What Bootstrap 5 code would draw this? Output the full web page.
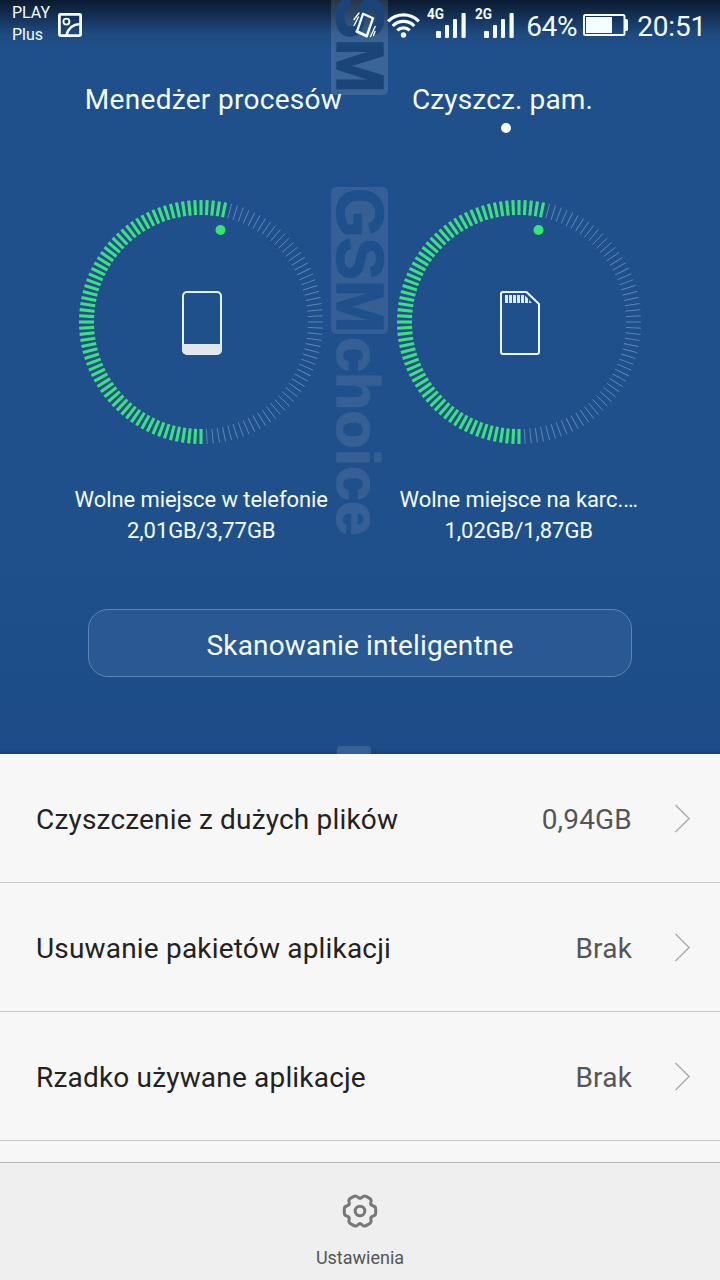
<!DOCTYPE html>
<html lang="pl">
<head>
<meta charset="utf-8">
<meta name="viewport" content="width=device-width, initial-scale=1">
<title>Czyszcz. pam.</title>
<link href="https://cdn.jsdelivr.net/npm/bootstrap@5.3.0/dist/css/bootstrap.min.css" rel="stylesheet">
<style>
body{font-family:Roboto,"Noto Sans",sans-serif;background:#f7f7f7;height:1280px;overflow:hidden;line-height:1.2}
svg{display:block;flex:none}
.hero{height:754px;background:linear-gradient(#0b1a2f 0,#143055 16px,#1e4a80 34px,#1f508b 48px,#1f508b 560px,#1d4c88 747px,#1a4478 754px);color:#f4fdff}
.statusbar{height:50px;padding:0 14px 0 12px}
.carrier{font-size:16px;line-height:22px;width:46px;padding-top:2px}
.pct{font-size:28px;line-height:50px;padding-top:2px;letter-spacing:-.4px;width:52px}
.clock{font-size:28px;line-height:50px;padding-top:2px;letter-spacing:-.2px}
.tabs{padding:33px 67px 0;height:86px;font-size:28px;letter-spacing:.3px}
.tabs>div{width:293px;line-height:34px;white-space:nowrap}
.tab-dot{width:10px;height:10px;background:#fff;margin:6px 1px 0 0}
.dials{padding:63px 42.5px 0;height:473px}
.dial-text{font-size:22px;line-height:31px;margin-top:39px;white-space:nowrap;letter-spacing:-.07px}
.scan{width:544px;height:68px;border:1px solid #5c84b4;border-radius:20px;background:#2a5892;color:#f4fdff;font-size:28px;letter-spacing:.16px;line-height:1}
.scan span{padding-top:5px}
.wm{left:331px;font:700 62px/57px "Liberation Sans",sans-serif}
.wm svg{overflow:visible}
.wm text{stroke-linejoin:round}
.opt{height:129px;border-bottom:1px solid #cbcbcb;padding:0 29px 0 36px;font-size:28px;color:#222;letter-spacing:.18px}
.opt span{padding-top:3px}
.opt-val{color:#555;margin-right:42px}
.bottombar{height:118px;background:#efefef;border-top:1px solid #b8b8b8;color:#555;font-size:18px}
</style>
</head>
<body>
<main class="d-flex flex-column h-100">
<section class="hero position-relative overflow-hidden flex-shrink-0">
  <div class="wm position-absolute" style="top:0" aria-hidden="true"><svg width="57" height="95"><rect y="-10" width="57" height="105" rx="5" fill="#fff" fill-opacity=".12"/><text transform="translate(6 -5) rotate(90)" textLength="98" lengthAdjust="spacingAndGlyphs" font-size="66" fill="#1b4579" stroke="#1b4579" stroke-width="1.500">SM</text></svg></div>
  <div class="wm position-absolute" style="top:187px" aria-hidden="true"><svg width="57" height="352"><rect width="57" height="147" rx="5" fill="#355f95"/><text transform="translate(6 1) rotate(90)" textLength="145" lengthAdjust="spacingAndGlyphs" font-size="66" fill="#1f508b" stroke="#1f508b" stroke-width="1.500">GSM</text><text transform="translate(6 150) rotate(90)" textLength="199" lengthAdjust="spacingAndGlyphs" font-size="62" fill="#355f95" stroke="#355f95" stroke-width="1.500">choice</text></svg></div>
  <div class="wm position-absolute" style="top:746px" aria-hidden="true"><svg width="57" height="8"><rect x="6" width="34" height="12" rx="3" fill="#355f95"/></svg></div>

  <div class="position-relative">
  <header class="statusbar d-flex">
    <div class="carrier">PLAY<br>Plus</div>
    <svg width="24" height="24" viewBox="0 0 24 24" style="margin-top:13px" fill="none" stroke="#f4fdff"><rect x="1.4" y="1.4" width="21.2" height="21.2" rx="1" stroke-width="2.8"/><circle cx="8.4" cy="8.6" r="3" stroke-width="1.9"/><path d="M8.500 22C10 16 14 11.500 22 11" stroke-width="2.500"/></svg>
    <div class="ms-auto d-flex">
      <svg width="24" height="26" viewBox="0 0 24 26" style="margin:12px 11px 0 0" fill="none" stroke="#f4fdff" stroke-linecap="round" stroke-linejoin="round"><path d="M11 1.800L21 6.200L14.800 24L5 19.500Z" stroke-width="2.300"/><path d="M14.500 24L5 19.500" stroke-width="3"/><path d="M7 1L2 7.500M6.500 5L2 13.500M23.200 14.500L18.500 24.500M23 19.500L21.500 23.500" stroke-width="1.400"/></svg>
      <svg width="33" height="26" viewBox="0 0 33 26" style="margin:12px 7px 0 0" fill="none" stroke="#f4fdff" stroke-width="3.200"><path d="M1.200 9.300A21.500 21.500 0 0 1 31.800 9.300M5.700 14A15 15 0 0 1 27.300 14M10.300 18.300A9 9 0 0 1 22.700 18.300"/><circle cx="16.500" cy="23" r="2.700" fill="#f4fdff" stroke="none"/></svg>
      <svg width="39" height="32" viewBox="0 0 39 32" style="margin:7px 9px 0 0" fill="#f4fdff"><text x="0" y="12" font-size="14.500" font-weight="700" textLength="17" lengthAdjust="spacingAndGlyphs">4G</text><rect x="9" y="24" width="5" height="7" rx="1"/><rect x="18" y="18" width="4" height="13" rx="1"/><rect x="26" y="12" width="4" height="19" rx="1"/><rect x="34.500" y="6" width="4.200" height="25" rx="1"/></svg>
      <svg width="39" height="32" viewBox="0 0 39 32" style="margin:7px 12px 0 0" fill="#f4fdff"><text x="0" y="12" font-size="14.500" font-weight="700" textLength="17" lengthAdjust="spacingAndGlyphs">2G</text><rect x="9" y="24" width="5" height="7" rx="1"/><rect x="18" y="18" width="4" height="13" rx="1"/><rect x="26" y="12" width="4" height="19" rx="1"/><rect x="34.500" y="6" width="4.200" height="25" rx="1"/></svg>
      <div class="pct">64%</div>
      <svg width="45" height="22" viewBox="0 0 45 22" style="margin:14px 9px 0 5px" fill="#f4fdff"><rect x="1" y="1" width="40.500" height="20" rx="1.500" fill="none" stroke="#f4fdff" stroke-width="2"/><rect x="3" y="3" width="26" height="16"/><path d="M42 5h1.500q1.500 0 1.500 1.500v9q0 1.500-1.500 1.500H42z"/></svg>
      <div class="clock">20:51</div>
    </div>
  </header>

  <nav class="tabs d-flex text-center">
    <div>Menedżer procesów</div>
    <div class="d-flex flex-column align-items-center"><span style="margin-right:8px;letter-spacing:.15px">Czyszcz. pam.</span><span class="tab-dot rounded-circle"></span></div>
  </nav>

  <div class="dials d-flex text-center">
    <div class="w-50">
      <svg class="mx-auto" width="246" height="246" viewBox="-123 -123 246 246"><g class="ticks" data-total="124" data-used="67"></g>
        <circle cx="19.500" cy="-92" r="5" fill="#33e772"/>
        <g transform="translate(-19 -31)"><rect x="1" y="1" width="38" height="62" rx="4" fill="none" stroke="#dff4ff" stroke-width="2"/><path d="M1 53.500H39V60Q39 63 35.500 63H4.500Q1 63 1 60Z" fill="#e1e7ec" stroke="#e1e7ec"/></g></svg>
      <div class="dial-text">Wolne miejsce w telefonie<br>2,01GB/3,77GB</div>
    </div>
    <div class="w-50">
      <svg class="mx-auto" width="246" height="246" viewBox="-123 -123 246 246"><g class="ticks" data-total="124" data-used="67"></g>
        <circle cx="19.500" cy="-92" r="5" fill="#33e772"/>
        <g transform="translate(-19 -31)"><path d="M3 1H26.500L39 13V61Q39 63 37 63H3Q1 63 1 61V3Q1 1 3 1Z" fill="none" stroke="#e9f9ff" stroke-width="2" stroke-linejoin="round"/><path d="M5 4h3v8H5zM9 4h3v8H9zM13 4h3v8h-3zM17 4h3v8h-3zM21 4h3v8h-3zM25 4.500l3 3V12h-3zM29 9l3 3h-3z" fill="#dfeaf5"/></g></svg>
      <div class="dial-text">Wolne miejsce na karc.…<br>1,02GB/1,87GB</div>
    </div>
  </div>
  <button class="scan d-flex align-items-center justify-content-center mx-auto p-0"><span>Skanowanie inteligentne</span></button>
  </div>
</section>

<section class="flex-grow-1 overflow-hidden">
  <div class="opt d-flex align-items-center"><span>Czyszczenie z dużych plików</span><span class="opt-val ms-auto">0,94GB</span><svg width="17" height="30" viewBox="0 0 17 30"><path d="M1.500 2L15 15.500L1.500 29" fill="none" stroke="#adadad" stroke-width="1.500"/></svg></div>
  <div class="opt d-flex align-items-center"><span>Usuwanie pakietów aplikacji</span><span class="opt-val ms-auto">Brak</span><svg width="17" height="30" viewBox="0 0 17 30"><path d="M1.500 2L15 15.500L1.500 29" fill="none" stroke="#adadad" stroke-width="1.500"/></svg></div>
  <div class="opt d-flex align-items-center"><span>Rzadko używane aplikacje</span><span class="opt-val ms-auto">Brak</span><svg width="17" height="30" viewBox="0 0 17 30"><path d="M1.500 2L15 15.500L1.500 29" fill="none" stroke="#adadad" stroke-width="1.500"/></svg></div>
</section>

<footer class="bottombar flex-shrink-0 d-flex flex-column align-items-center">
  <svg width="40" height="40" viewBox="-20 -20 40 40" style="margin-top:28px" fill="none" stroke="#787878" stroke-width="3" stroke-linecap="round"><circle r="4.800"/><defs><path id="lobe" d="M-6.400-11.090Q-5.200-11.800-5-13.300Q-4.400-15.700-2-15.700H2Q4.400-15.700 5-13.300Q5.200-11.800 6.400-11.090"/></defs><use href="#lobe" transform="rotate(30)"/><use href="#lobe" transform="rotate(90)"/><use href="#lobe" transform="rotate(150)"/><use href="#lobe" transform="rotate(210)"/><use href="#lobe" transform="rotate(270)"/><use href="#lobe" transform="rotate(330)"/></svg>
  <div style="margin-top:16px">Ustawienia</div>
</footer>
</main>
<script src="https://cdn.jsdelivr.net/npm/bootstrap@5.3.0/dist/js/bootstrap.bundle.min.js"></script>
<script>
// Ticks run clockwise from the bottom of each dial; the first ones are the used share.
document.querySelectorAll('.ticks').forEach(function(g){
  var total=+g.dataset.total, used=+g.dataset.used, s='';
  for(var i=0;i<total;i++){
    var on=i<used;
    s+='<path d="M0 107V122" transform="rotate('+(i*360/total)+')" stroke="'+(on?'#3fdf80':'#6089b9')+'" stroke-width="'+(on?3.1:.9)+'"/>';
  }
  g.innerHTML=s;
});
</script>
</body>
</html>
